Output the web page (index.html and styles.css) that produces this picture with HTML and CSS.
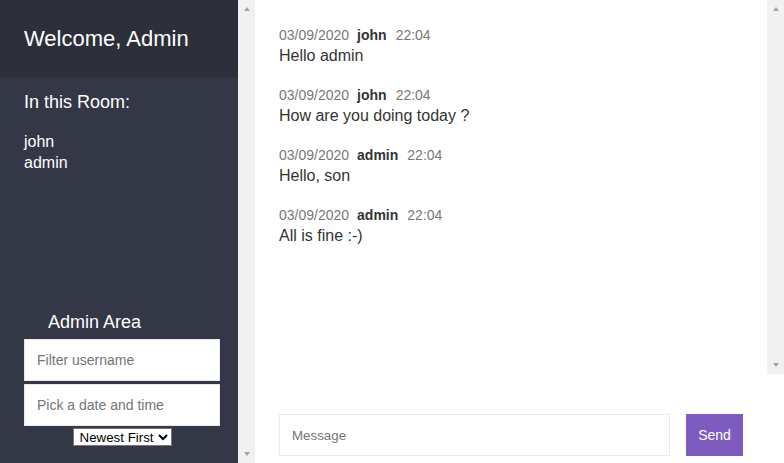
FILE: index.html
```html
<!DOCTYPE html>
<html lang="en">
<head>
<meta charset="utf-8">
<title>Chat</title>
<link rel="stylesheet" href="styles.css">
</head>
<body>
<aside class="sidebar">
  <header class="sidebar-header">Welcome, Admin</header>
  <section class="room">
    <h2 class="room-title">In this Room:</h2>
    <ul class="users">
      <li>john</li>
      <li>admin</li>
    </ul>
  </section>
  <section class="admin">
    <h3 class="admin-title">Admin Area</h3>
    <input class="field" type="text" placeholder="Filter username">
    <input class="field field-second" type="text" placeholder="Pick a date and time">
    <select class="order">
      <option>Newest First</option>
      <option>Oldest First</option>
    </select>
  </section>
</aside>
<div class="scrollbar scrollbar-full">
  <span class="arrow arrow-up"></span>
  <span class="arrow arrow-down"></span>
</div>
<main class="chat">
  <div class="messages-wrap">
    <div class="messages">
      <div class="message">
        <div class="meta"><span class="date">03/09/2020</span><span class="user">john</span><span class="time">22:04</span></div>
        <div class="text">Hello admin</div>
      </div>
      <div class="message">
        <div class="meta"><span class="date">03/09/2020</span><span class="user">john</span><span class="time">22:04</span></div>
        <div class="text">How are you doing today ?</div>
      </div>
      <div class="message">
        <div class="meta"><span class="date">03/09/2020</span><span class="user">admin</span><span class="time">22:04</span></div>
        <div class="text">Hello, son</div>
      </div>
      <div class="message">
        <div class="meta"><span class="date">03/09/2020</span><span class="user">admin</span><span class="time">22:04</span></div>
        <div class="text">All is fine :-)</div>
      </div>
    </div>
    <div class="scrollbar">
      <span class="arrow arrow-up"></span>
      <span class="arrow arrow-down"></span>
    </div>
  </div>
  <form class="composer">
    <input class="message-input" type="text" placeholder="Message">
    <button class="send" type="button">Send</button>
  </form>
</main>
</body>
</html>
```
FILE: styles.css
```css
* {
  box-sizing: border-box;
}

html, body {
  margin: 0;
  height: 463px;
  overflow: hidden;
}

body {
  display: flex;
  font-family: "Liberation Sans", Arial, sans-serif;
  background: #ffffff;
}

.sidebar {
  width: 238px;
  height: 463px;
  flex: none;
  display: flex;
  flex-direction: column;
  background: #343746;
  color: #ffffff;
}

.sidebar-header {
  height: 77px;
  flex: none;
  display: flex;
  align-items: center;
  padding: 0 24px;
  background: #2d2f3b;
  font-size: 22px;
}

.room {
  padding: 0 24px;
}

.room-title {
  margin: 14px 0 0;
  font-size: 18px;
  font-weight: normal;
  line-height: 22px;
}

.users {
  list-style: none;
  margin: 18px 0 0;
  padding: 0;
  font-size: 16px;
  line-height: 21px;
}

.admin {
  margin-top: auto;
  padding: 0 18px 17px 24px;
  display: flex;
  flex-direction: column;
}

.admin-title {
  margin: 0 0 6px;
  padding-left: 24px;
  font-size: 18px;
  font-weight: normal;
  line-height: 22px;
}

.field {
  display: block;
  width: 196px;
  height: 42px;
  margin: 0;
  padding: 0 12px;
  border: 1px solid #e8e8e8;
  background: #ffffff;
  font-family: "Liberation Sans", Arial, sans-serif;
  font-size: 14px;
  color: #333333;
  outline: none;
}

.field::placeholder {
  color: #757575;
}

.field-second {
  margin-top: 3px;
}

.order {
  align-self: center;
  margin: 2px 0 0 0;
  height: 18px;
  padding: 0 0 0 2px;
  border: 1px solid #767676;
  border-radius: 0;
  background: #ffffff;
  color: #000000;
  font-family: "Liberation Sans", Arial, sans-serif;
  font-size: 13.333px;
  line-height: 16px;
}

.scrollbar {
  width: 17px;
  flex: none;
  background: #f1f1f1;
  display: flex;
  flex-direction: column;
  justify-content: space-between;
  align-items: center;
  padding: 7px 0;
}

.scrollbar-full {
  height: 463px;
}

.arrow {
  width: 0;
  height: 0;
  border-left: 3.5px solid transparent;
  border-right: 3.5px solid transparent;
}

.arrow-up {
  border-bottom: 4px solid #a3a3a3;
}

.arrow-down {
  border-top: 4px solid #a3a3a3;
}

.chat {
  flex: 1;
  display: flex;
  flex-direction: column;
  min-width: 0;
}

.messages-wrap {
  height: 374px;
  flex: none;
  display: flex;
}

.messages {
  flex: 1;
  padding: 25px 24px 0;
}

.message {
  margin-bottom: 18px;
}

.meta {
  font-size: 14px;
  line-height: 20px;
  color: #777777;
}

.user {
  margin: 0 9px 0 8px;
  font-weight: bold;
  color: #333333;
}

.text {
  font-size: 16px;
  line-height: 22px;
  color: #333333;
}

.composer {
  flex: 1;
  margin: 0;
  padding: 40px 41px 0 24px;
  display: flex;
  align-items: flex-start;
  gap: 16px;
}

.message-input {
  flex: 1;
  height: 42px;
  margin: 0;
  padding: 0 12px;
  border: 1px solid #ebebeb;
  background: #ffffff;
  font-family: "Liberation Sans", Arial, sans-serif;
  font-size: 13.333px;
  color: #333333;
  outline: none;
}

.message-input::placeholder {
  color: #757575;
}

.send {
  width: 57px;
  height: 42px;
  margin: 0;
  padding: 0;
  border: none;
  background: #7e5bbe;
  color: #ffffff;
  font-family: "Liberation Sans", Arial, sans-serif;
  font-size: 14px;
}
```
